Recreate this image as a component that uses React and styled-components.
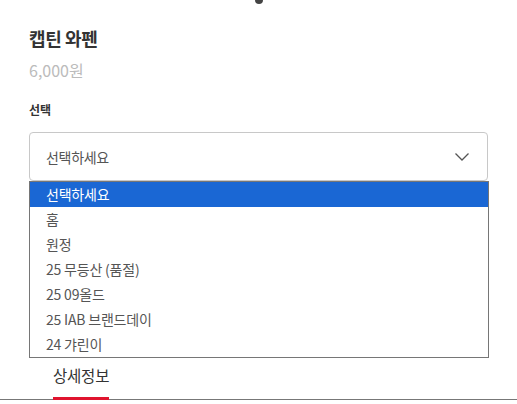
import React from "react"
import styled, { createGlobalStyle } from "styled-components"

const GlobalStyle = createGlobalStyle`
  body {
    margin: 0;
    background: #fff;
    font-family: "Noto Sans CJK KR", "Noto Sans", sans-serif;
    overflow: hidden;
  }
`

const options = ["선택하세요", "홈", "원정", "25 무등산 (품절)", "25 09올드", "25 IAB 브랜드데이", "24 갸린이"]

const App = () => {
  return (
    <Page>
      <GlobalStyle />
      <Dots>
        <Dot />
      </Dots>
      <Info>
        <Title>캡틴 와펜</Title>
        <Price>6,000원</Price>
        <Label>선택</Label>
        <SelectWrap>
          <SelectBox>
            <SelectText>선택하세요</SelectText>
            <svg width="16" height="10" viewBox="0 0 16 10" fill="none">
              <path d="M1.5 1.5 L8 8 L14.5 1.5" stroke="#555" strokeWidth="1.3" />
            </svg>
          </SelectBox>
          <Menu>
            {options.map((o, i) => (
              <Option key={o} $active={i === 0}>{o}</Option>
            ))}
          </Menu>
        </SelectWrap>
      </Info>
      <Tabs>
        <Tab $active>상세정보</Tab>
      </Tabs>
    </Page>
  )
}

export default App

const Page = styled.div`
  width: 517px;
  height: 404px;
  position: relative;
`
const Dots = styled.div`
  display: flex;
  justify-content: center;
  height: 0;
`
const Dot = styled.span`
  width: 8px;
  height: 8px;
  border-radius: 50%;
  background: #444;
  margin-top: -4px;
`
const Info = styled.div`
  padding: 26px 29px 0 29px;
`
const Title = styled.div`
  font-size: 18px;
  font-weight: bold;
  color: #333;
  line-height: 24px;
  letter-spacing: -0.4px;
`
const Price = styled.div`
  margin-top: 9px;
  font-size: 16px;
  color: #bbb;
  line-height: 22px;
`
const Label = styled.div`
  margin-top: 20px;
  font-size: 12px;
  font-weight: bold;
  color: #333;
  line-height: 18px;
`
const SelectWrap = styled.div`
  position: relative;
  margin-top: 13px;
  width: 460px;
`
const SelectBox = styled.div`
  box-sizing: border-box;
  height: 49px;
  width: 459px;
  border: 1px solid #c8c8c8;
  border-radius: 4px;
  display: flex;
  align-items: center;
  justify-content: space-between;
  padding: 0 17px 0 16px;
`
const SelectText = styled.span`
  font-size: 14px;
  color: #555;
  letter-spacing: -0.3px;
`
const Menu = styled.div`
  position: absolute;
  top: 49px;
  left: 0;
  width: 460px;
  box-sizing: border-box;
  border: 1px solid #767676;
  background: #fff;
  z-index: 2;
`
const Option = styled.div`
  height: 25px;
  line-height: 25px;
  padding-left: 16px;
  font-size: 14px;
  letter-spacing: -0.2px;
  color: ${p => (p.$active ? "#fff" : "#555")};
  background: ${p => (p.$active ? "#1a67d4" : "#fff")};
`
const Tabs = styled.div`
  position: absolute;
  left: 0;
  right: 0;
  bottom: 4px;
  display: flex;
  padding-left: 53px;
  border-bottom: 1px solid #777;
`
const Tab = styled.div`
  font-size: 15.5px;
  color: #333;
  line-height: 22px;
  padding: 0 0 11px;
  letter-spacing: -0.2px;
  border-bottom: 3px solid ${p => (p.$active ? "#e0142e" : "transparent")};
  margin-bottom: -1px;
`
